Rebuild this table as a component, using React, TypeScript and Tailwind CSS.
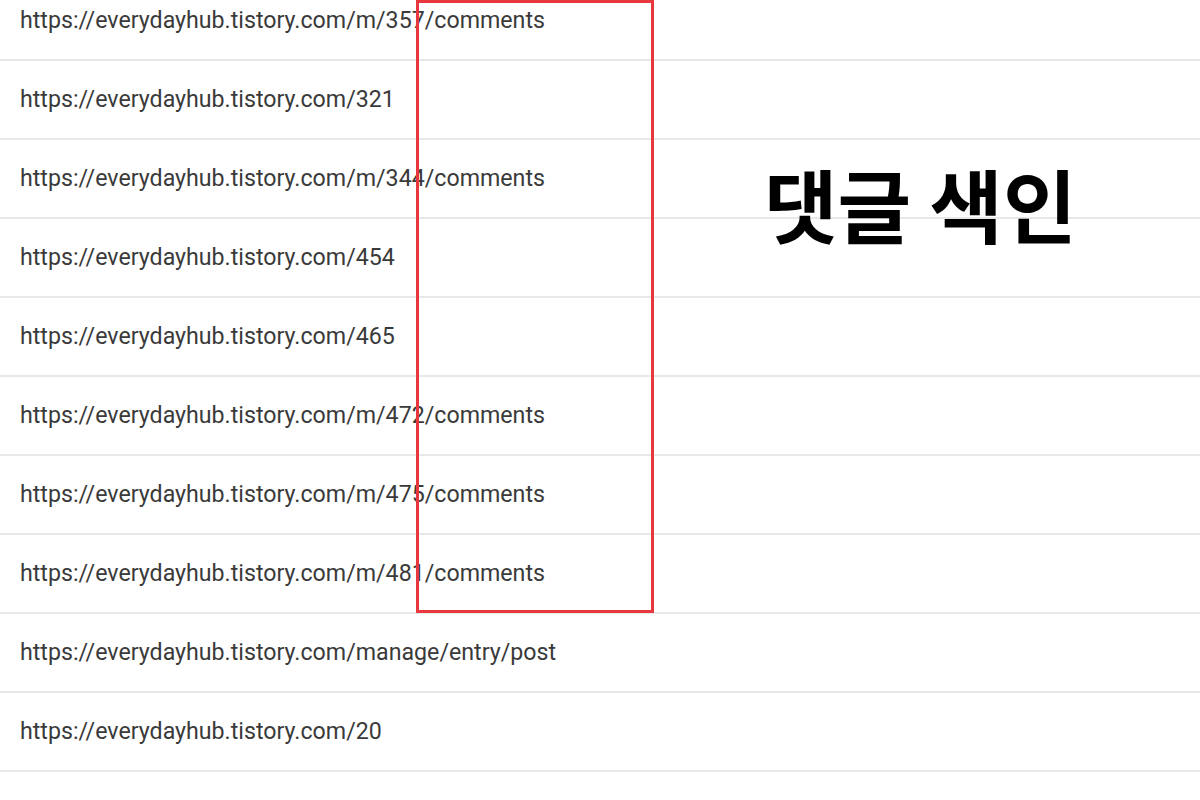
const urls = [
  "https://everydayhub.tistory.com/m/357/comments",
  "https://everydayhub.tistory.com/321",
  "https://everydayhub.tistory.com/m/344/comments",
  "https://everydayhub.tistory.com/454",
  "https://everydayhub.tistory.com/465",
  "https://everydayhub.tistory.com/m/472/comments",
  "https://everydayhub.tistory.com/m/475/comments",
  "https://everydayhub.tistory.com/m/481/comments",
  "https://everydayhub.tistory.com/manage/entry/post",
  "https://everydayhub.tistory.com/20",
];

export default function App() {
  return (
    <div className="relative w-[1200px] h-[800px] overflow-hidden bg-white">
      {/* url list, first row scrolled partly out of view */}
      <ul className="-mt-[18px]">
        {urls.map((url) => (
          <li
            key={url}
            className="h-[79px] flex items-center px-5 border-b-2 border-[#e8e8e8] text-[23.2px] text-[#3a3a3a] font-['Roboto',sans-serif]">
            {url}
          </li>
        ))}
      </ul>

      {/* annotation overlay */}
      <div className="absolute left-[416px] top-0 w-[238px] h-[613px] border-[3px] border-[#e8383d]" />
      <div className="absolute left-[764px] top-[162px] text-[80px] leading-none font-bold text-black font-['Noto_Sans_CJK_KR',sans-serif]">
        댓글 색인
      </div>
    </div>
  );
}
